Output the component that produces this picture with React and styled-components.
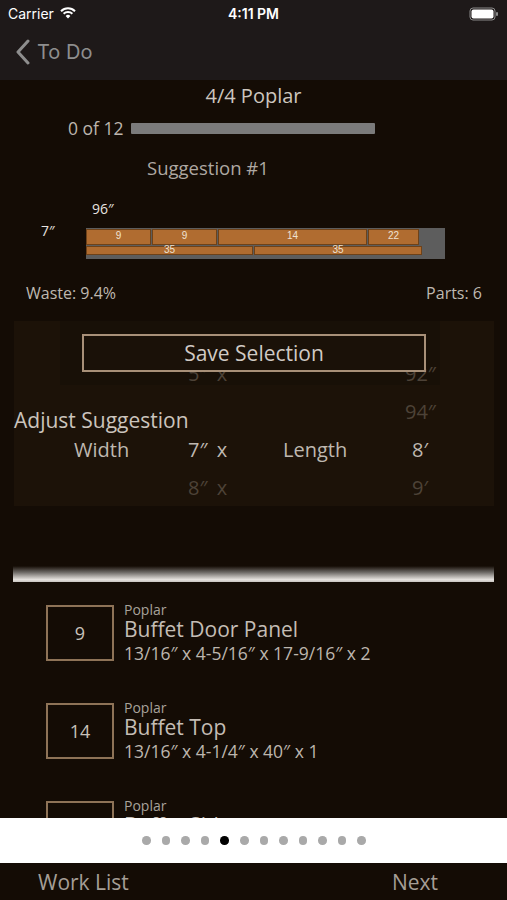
import React from 'react';
import styled, { createGlobalStyle } from 'styled-components';

const GlobalStyle = createGlobalStyle`
    html, body {
        margin: 0;
        padding: 0;
        background: #140c05;
    }
`

const boardRows = [
    [{ label: '9', width: 65 }, { label: '9', width: 65 }, { label: '14', width: 149 }, { label: '22', width: 51 }],
    [{ label: '35', width: 167 }, { label: '35', width: 168 }]
]

const parts = [
    { num: '9', species: 'Poplar', name: 'Buffet Door Panel', dims: '13/16″ x 4-5/16″ x 17-9/16″ x 2' },
    { num: '14', species: 'Poplar', name: 'Buffet Top', dims: '13/16″ x 4-1/4″ x 40″ x 1' },
    { num: '', species: 'Poplar', name: 'Buffet Side', dims: '13/16″ x 4″ x 12″ x 2' }
]

const pickerRows = [
    { w: '5″', l: '92″', ghost: true },
    { w: '', l: '94″', ghost: true },
    { w: '7″', l: '8′', labels: true },
    { w: '8″', l: '9′', ghost: true }
]

const App = () => {
    return (
        <Page>
            <GlobalStyle />
            <StatusBar>
                <Carrier>
                    Carrier
                    <svg width="16" height="12" viewBox="0 0 16 12">
                        <path d="M1 4.2 A10 10 0 0 1 15 4.2" stroke="#fff" strokeWidth="2" fill="none" />
                        <path d="M3.6 6.8 A6.4 6.4 0 0 1 12.4 6.8" stroke="#fff" strokeWidth="2" fill="none" />
                        <path d="M8 11.5 L5.6 8.9 A3.4 3.4 0 0 1 10.4 8.9 Z" fill="#fff" />
                    </svg>
                </Carrier>
                <Clock>4:11 PM</Clock>
                <Battery>
                    <svg width="30" height="14" viewBox="0 0 30 14">
                        <rect x="1" y="1" width="25" height="12" rx="3" stroke="#8a8a8a" strokeWidth="1" fill="none" />
                        <rect x="2.5" y="2.5" width="22" height="9" rx="2" fill="#fff" />
                        <rect x="27" y="5" width="2" height="4" rx="1" fill="#8a8a8a" />
                    </svg>
                </Battery>
            </StatusBar>
            <NavBar>
                <BackButton>
                    <svg width="18" height="26" viewBox="0 0 18 26">
                        <polyline points="14,2 4,13 14,24" stroke="#8e8e8e" strokeWidth="3" fill="none" strokeLinecap="round" strokeLinejoin="round" />
                    </svg>
                    To Do
                </BackButton>
            </NavBar>
            <Content>
                <Title>4/4 Poplar</Title>
                <ProgressRow>
                    <ProgressLabel>0 of 12</ProgressLabel>
                    <ProgressTrack />
                </ProgressRow>
                <SuggestionTitle>Suggestion #1</SuggestionTitle>
                <LengthLabel>96″</LengthLabel>
                <BoardRow>
                    <WidthLabel>7″</WidthLabel>
                    <Board>
                        {boardRows.map((row, r) => (
                            <BoardLine key={r} $thin={r === 1}>
                                {row.map((p, i) => (
                                    <Piece key={i} $thin={r === 1} style={{ width: p.width }}>{p.label}</Piece>
                                ))}
                            </BoardLine>
                        ))}
                    </Board>
                </BoardRow>
                <StatsRow>
                    <span>Waste: 9.4%</span>
                    <span>Parts: 6</span>
                </StatsRow>
                <AdjustPanel>
                    <ButtonWell />
                    <Picker>
                        {pickerRows.map((row, i) => (
                            <PickerRow key={i} $ghost={row.ghost}>
                                <PickerCell>{row.labels ? 'Width' : ''}</PickerCell>
                                <PickerCell>{row.w ? `${row.w} x` : ''}</PickerCell>
                                <PickerCell>{row.labels ? 'Length' : ''}</PickerCell>
                                <PickerValue>{row.l}</PickerValue>
                            </PickerRow>
                        ))}
                    </Picker>
                    <SaveButton>Save Selection</SaveButton>
                    <AdjustTitle>Adjust Suggestion</AdjustTitle>
                </AdjustPanel>
                <Divider />
                <PartList>
                    {parts.map((p, i) => (
                        <PartItem key={i}>
                            <PartBox>{p.num}</PartBox>
                            <PartText>
                                <PartSpecies>{p.species}</PartSpecies>
                                <PartName>{p.name}</PartName>
                                <PartDims>{p.dims}</PartDims>
                            </PartText>
                        </PartItem>
                    ))}
                </PartList>
            </Content>
            <Pager>
                {Array.from({ length: 12 }).map((_, i) => (
                    <Dot key={i} $active={i === 4} />
                ))}
            </Pager>
            <BottomBar>
                <BottomLink>Work List</BottomLink>
                <BottomLink>Next</BottomLink>
            </BottomBar>
        </Page>
    )
}

const Page = styled.div`
    width: 507px;
    height: 900px;
    display: flex;
    flex-direction: column;
    overflow: hidden;
    background: #140c05;
    font-family: 'Open Sans', 'Lato', sans-serif;
`

const StatusBar = styled.div`
    height: 26px;
    flex-shrink: 0;
    background: #1e1919;
    display: grid;
    grid-template-columns: 1fr auto 1fr;
    align-items: center;
    padding: 0 8px;
    color: #fff;
    font-family: 'Inter', 'Liberation Sans', sans-serif;
    font-size: 14px;
`

const Carrier = styled.div`
    display: flex;
    align-items: center;
    gap: 6px;
`

const Clock = styled.div`
    font-weight: 600;
`

const Battery = styled.div`
    display: flex;
    justify-content: flex-end;
    padding-top: 2px;
`

const NavBar = styled.div`
    height: 54px;
    flex-shrink: 0;
    background: #1e1919;
    display: flex;
    align-items: center;
    padding-left: 14px;
`

const BackButton = styled.div`
    display: flex;
    align-items: center;
    gap: 5px;
    color: #8e8e8e;
    font-size: 20px;
    font-family: 'Inter', 'Liberation Sans', sans-serif;
    margin-top: -2px;
`

const Content = styled.div`
    flex: 1;
    overflow: hidden;
    display: flex;
    flex-direction: column;

    & > * {
        flex-shrink: 0;
    }
`

const Title = styled.div`
    text-align: center;
    color: #cdc6bf;
    font-size: 20px;
    line-height: 24px;
    margin-top: 4px;
`

const ProgressRow = styled.div`
    display: flex;
    align-items: center;
    gap: 7px;
    padding-left: 68px;
    margin-top: 8px;
    height: 24px;
`

const ProgressLabel = styled.span`
    color: #bdb6ae;
    font-size: 17.5px;
`

const ProgressTrack = styled.div`
    width: 244px;
    height: 11px;
    background: #7b7b7b;
    border-radius: 1px;
`

const SuggestionTitle = styled.div`
    padding-left: 147px;
    color: #aea8a2;
    font-size: 18.5px;
    line-height: 24px;
    margin-top: 16px;
`

const LengthLabel = styled.div`
    padding-left: 92px;
    color: #e8e4e0;
    font-size: 14px;
    line-height: 18px;
    margin-top: 20px;
`

const BoardRow = styled.div`
    display: flex;
    align-items: flex-start;
    margin-top: 10px;
    padding-left: 41px;
`

const WidthLabel = styled.div`
    width: 45px;
    color: #e8e4e0;
    font-size: 14px;
    line-height: 14px;
    margin-top: -4px;
`

const Board = styled.div`
    width: 359px;
    height: 31px;
    background: #5d5d5d;
    display: flex;
    flex-direction: column;
    gap: 1px;
    padding-top: 1px;
    box-sizing: border-box;
`

const BoardLine = styled.div`
    display: flex;
    gap: 1px;
    height: ${props => props.$thin ? '9px' : '16px'};
`

const Piece = styled.div`
    box-sizing: border-box;
    background: #b06c30;
    border: 1px solid #6e4219;
    color: #efe2d2;
    font-family: 'Liberation Sans', sans-serif;
    font-size: 10px;
    line-height: ${props => props.$thin ? '6px' : '12px'};
    text-align: center;
    overflow: visible;
    white-space: nowrap;
`

const StatsRow = styled.div`
    display: flex;
    justify-content: space-between;
    padding: 0 25px 0 26px;
    margin-top: 23px;
    color: #bfb8b0;
    font-size: 16px;
    line-height: 22px;
`

const AdjustPanel = styled.div`
    position: relative;
    margin: 17px 13px 0 14px;
    height: 185px;
    background: #1c1208;
`

const ButtonWell = styled.div`
    position: absolute;
    left: 46px;
    top: 0;
    width: 380px;
    height: 64px;
    background: #181007;
`

const Picker = styled.div`
    position: relative;
    padding-top: 33px;
    display: flex;
    flex-direction: column;
`

const PickerRow = styled.div`
    display: grid;
    grid-template-columns: 114px 95px 122px 30px;
    padding-left: 60px;
    height: 38px;
    align-items: center;
    color: ${props => props.$ghost ? '#4d4237' : '#bfb8b0'};
    font-size: 20px;
`

const PickerCell = styled.div`
    white-space: nowrap;
    word-spacing: 4px;
`

const PickerValue = styled.div`
    text-align: center;
    white-space: nowrap;
`

const SaveButton = styled.div`
    position: absolute;
    left: 68px;
    top: 13px;
    width: 344px;
    height: 38px;
    box-sizing: border-box;
    border: 2px solid #a89078;
    background: #1a1108;
    display: flex;
    align-items: center;
    justify-content: center;
    color: #d0cac4;
    font-size: 21px;
`

const AdjustTitle = styled.div`
    position: absolute;
    left: 0;
    top: 86px;
    color: #cbc4bd;
    font-size: 21px;
    line-height: 26px;
`

const Divider = styled.div`
    margin: 60px 13px 0 13px;
    height: 16px;
    background: linear-gradient(to bottom, #140c05 0%, #6e6a66 40%, #e6e2de 85%, #c8c4c0 100%);
`

const PartList = styled.div`
    display: flex;
    flex-direction: column;
    padding: 20px 0 0 46px;
`

const PartItem = styled.div`
    display: flex;
    align-items: flex-start;
    gap: 10px;
    height: 98px;
    flex-shrink: 0;
`

const PartBox = styled.div`
    width: 68px;
    height: 56px;
    margin-top: 3px;
    box-sizing: border-box;
    border: 2px solid #8e7357;
    display: flex;
    align-items: center;
    justify-content: center;
    color: #c9c2ba;
    font-size: 18px;
    flex-shrink: 0;
`

const PartText = styled.div`
    display: flex;
    flex-direction: column;
`

const PartSpecies = styled.div`
    color: #a8a29b;
    font-size: 14px;
    line-height: 15px;
`

const PartName = styled.div`
    color: #c4bdb5;
    font-size: 21px;
    line-height: 25px;
`

const PartDims = styled.div`
    color: #bdb6ae;
    font-size: 17.5px;
    line-height: 22px;
`

const Pager = styled.div`
    height: 45px;
    flex-shrink: 0;
    background: #fff;
    display: flex;
    align-items: center;
    justify-content: center;
    gap: 11px;
    padding-left: 1px;
`

const Dot = styled.div`
    width: 8.6px;
    height: 8.6px;
    border-radius: 50%;
    background: ${props => props.$active ? '#000' : '#a9a9a9'};
`

const BottomBar = styled.div`
    height: 37px;
    flex-shrink: 0;
    background: #140c05;
    display: flex;
    align-items: center;
    justify-content: space-between;
    padding: 0 69px 0 38px;
`

const BottomLink = styled.span`
    color: #a59e96;
    font-size: 21px;
`

export default App;
